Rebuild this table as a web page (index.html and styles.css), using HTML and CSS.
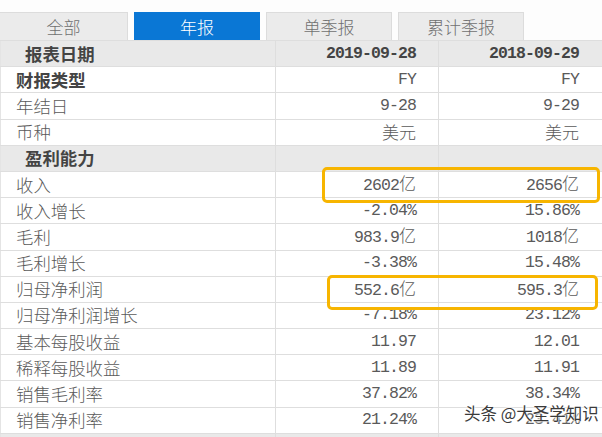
FILE: index.html
```html
<!DOCTYPE html>
<html lang="zh">
<head>
<meta charset="utf-8">
<link rel="stylesheet" href="styles.css">
</head>
<body>
<div class="page">
  <div class="tabs">
    <div class="tab">全部</div>
    <div class="tab active">年报</div>
    <div class="tab">单季报</div>
    <div class="tab">累计季报</div>
  </div>
  <table class="grid">
    <colgroup><col class="c1"><col class="c2"><col class="c3"></colgroup>
    <tr class="head"><td class="lbl sub">报表日期</td><td class="val">2019-09-28</td><td class="val">2018-09-29</td></tr>
    <tr><td class="lbl strong">财报类型</td><td class="val">FY</td><td class="val">FY</td></tr>
    <tr><td class="lbl">年结日</td><td class="val">9-28</td><td class="val">9-29</td></tr>
    <tr><td class="lbl">币种</td><td class="val cn">美元</td><td class="val cn">美元</td></tr>
    <tr class="head"><td class="lbl sub">盈利能力</td><td></td><td></td></tr>
    <tr><td class="lbl">收入</td><td class="val">2602<span class="unit">亿</span></td><td class="val">2656<span class="unit">亿</span></td></tr>
    <tr><td class="lbl">收入增长</td><td class="val">-2.04%</td><td class="val">15.86%</td></tr>
    <tr><td class="lbl">毛利</td><td class="val">983.9<span class="unit">亿</span></td><td class="val">1018<span class="unit">亿</span></td></tr>
    <tr><td class="lbl">毛利增长</td><td class="val">-3.38%</td><td class="val">15.48%</td></tr>
    <tr><td class="lbl">归母净利润</td><td class="val">552.6<span class="unit">亿</span></td><td class="val">595.3<span class="unit">亿</span></td></tr>
    <tr><td class="lbl">归母净利润增长</td><td class="val">-7.18%</td><td class="val">23.12%</td></tr>
    <tr><td class="lbl">基本每股收益</td><td class="val">11.97</td><td class="val">12.01</td></tr>
    <tr><td class="lbl">稀释每股收益</td><td class="val">11.89</td><td class="val">11.91</td></tr>
    <tr><td class="lbl">销售毛利率</td><td class="val">37.82%</td><td class="val">38.34%</td></tr>
    <tr><td class="lbl">销售净利率</td><td class="val">21.24%</td><td class="val">23.41%</td></tr>
    <tr class="head"><td class="lbl sub">&nbsp;</td><td></td><td></td></tr>
  </table>
  <div class="mark mark-1"></div>
  <div class="mark mark-2"></div>
  <div class="watermark">头条 @大圣学知识</div>
</div>
</body>
</html>
```
FILE: styles.css
```css
html, body {
  margin: 0;
  padding: 0;
  background: #fdfdfd;
  overflow: hidden;
}
.page {
  position: relative;
  width: 602px;
  height: 437px;
  overflow: hidden;
  font-family: "Noto Sans CJK SC", sans-serif;
}
.tabs {
  display: flex;
  gap: 6px;
  padding-top: 12px;
  height: 28px;
}
.tab {
  width: 124px;
  height: 27px;
  border: 1px solid #dcdcdc;
  border-bottom: none;
  background: #ebebeb;
  color: #707070;
  font-size: 17px;
  font-weight: 300;
  line-height: 27px;
  text-align: center;
}
.tab:first-child {
  width: 127px;
  border-left: none;
}
.tab.active {
  background: #0a77d5;
  border-color: #0a77d5;
  color: #fff;
}
.grid {
  border-collapse: collapse;
  table-layout: fixed;
  width: 606px;
  background: #fff;
}
.c1 { width: 275px; }
.c2 { width: 163px; }
.c3 { width: 168px; }
.grid tr { height: 26.2px; }
.grid td {
  padding: 0;
  border: 1px solid #dedede;
  color: #5a5a5a;
  white-space: nowrap;
  line-height: 18px;
  vertical-align: middle;
}
.grid td:first-child { border-left-color: #e4e4e4; }
.grid tr.head td {
  background: #e9e9e9;
  color: #444;
  font-weight: bold;
}
.lbl {
  font-size: 17.4px;
  font-weight: 300;
  padding-left: 15px !important;
}
.lbl.sub { padding-left: 24px !important; }
.lbl.strong { font-weight: bold; color: #444 !important; }
.val {
  text-align: right;
  padding-right: 22px !important;
  font-family: "Liberation Mono", "Noto Sans CJK SC", monospace;
  font-size: 16.5px;
  letter-spacing: -0.9px;
}
.grid td:last-child { padding-right: 27px !important; }
.val.cn, .unit {
  font-family: "Noto Sans CJK SC", sans-serif;
  font-size: 17px;
  font-weight: 300;
  letter-spacing: 0;
}
.mark {
  position: absolute;
  border: 3px solid #f7b500;
  border-radius: 5px;
  box-sizing: border-box;
}
.mark-1 { left: 322px; top: 167px; width: 278px; height: 36px; }
.mark-2 { left: 327px; top: 275px; width: 271px; height: 35px; }
.watermark {
  position: absolute;
  left: 464px;
  top: 401px;
  font-size: 16.5px;
  color: #3a3a3a;
  text-shadow: 0 0 2px #fff, 0 0 2px #fff, 0 0 3px #fff;
}
```
